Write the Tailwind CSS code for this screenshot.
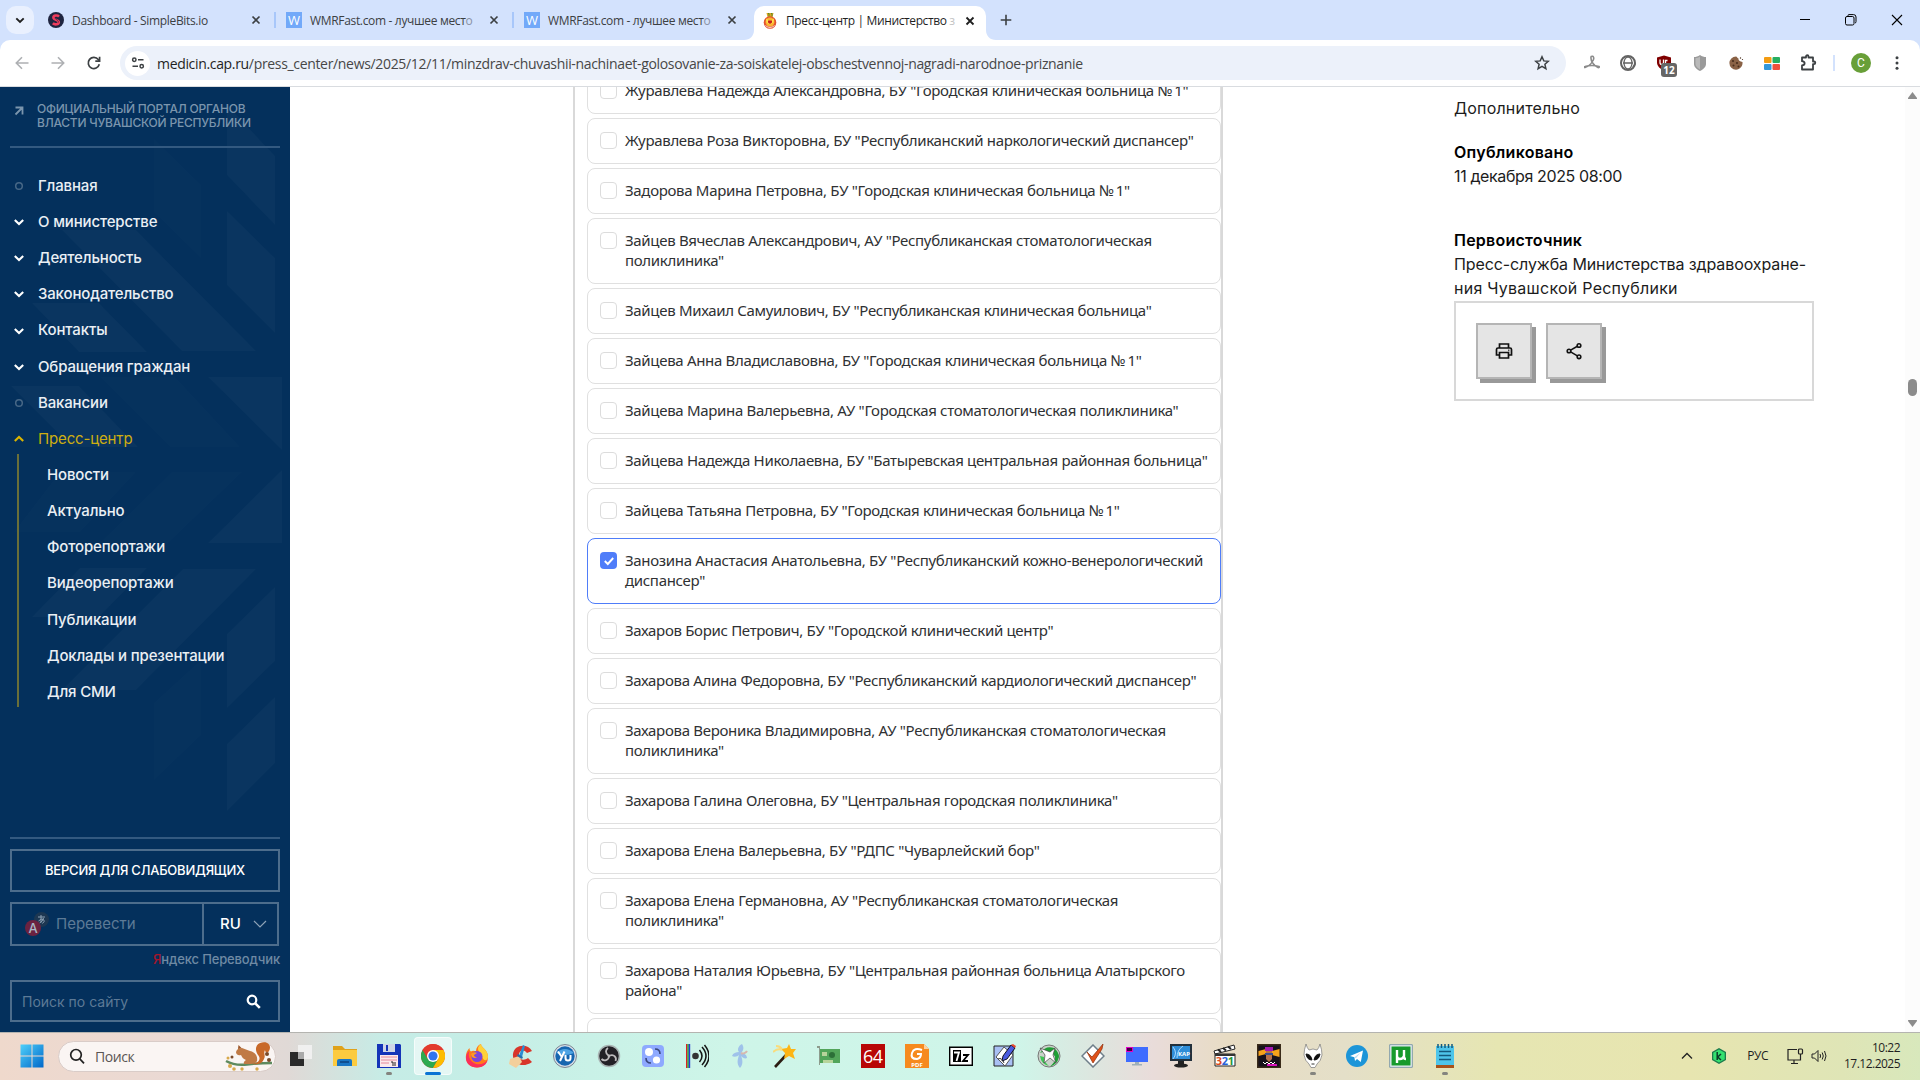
<!DOCTYPE html>
<html lang="ru">
<head>
<meta charset="utf-8">
<title>Пресс-центр | Министерство здравоохранения</title>
<script src="https://cdn.jsdelivr.net/npm/@tailwindcss/browser@4"></script>
</head>
<body class="bg-white overflow-hidden">
<div class="w-[1920px] h-[1080px] flex flex-col overflow-hidden font-['Open_Sans',sans-serif]">

  <!-- Tab strip -->
  <header class="h-10 shrink-0 bg-[#d3e2fd] flex items-stretch text-[12px] tracking-[-0.33px] text-[#3c4043]">
    <div class="w-[37px] pl-1.5 pt-1.5">
      <div class="size-7 rounded-[10px] bg-[#e9f0fe] flex items-center justify-center">
        <svg class="size-3" viewBox="0 0 12 12" fill="none" stroke="#1f1f1f" stroke-width="1.9"><path d="M2.3 4.3 6 8l3.7-3.7"/></svg>
      </div>
    </div>
    <div class="w-[238px] flex items-center pl-[11px]">
      <svg class="size-4 mr-2 shrink-0" viewBox="0 0 16 16"><circle cx="8" cy="8" r="8" fill="#1f2540"/><path d="M11 4.6C9.5 3 5.4 3.300 5.400 5.600c0 2.600 5.400 1.900 5.400 4.700 0 2.300-4 2.700-6 .900" fill="none" stroke="#ef3c5c" stroke-width="2.600"/><path d="M10 5.600C8 4.600 7 5.200 7 6c0 1.500 4 2 3.500 4.500" fill="none" stroke="#1f2540" stroke-width=".6"/></svg>
      <span class="w-[176px] pt-0.5 whitespace-nowrap">Dashboard - SimpleBits.io</span>
      <svg class="size-4" viewBox="0 0 16 16" stroke="#3c4043" stroke-width="1.7"><path d="m4.500 4.500 7 7m0-7-7 7"/></svg>
    </div>
    <div class="w-[238px] flex items-center">
      <span class="w-0.5 h-4 bg-[#a8c7fa] mr-[9px] -ml-px"></span>
      <span class="size-4 mr-2 ml-px bg-[#72a9f9] text-white text-[13px] leading-4 text-center tracking-normal shrink-0">W</span>
      <span class="w-[176px] pt-0.5 whitespace-nowrap">WMRFast.com - лучшее мест<span class="text-[#8a93a5]">о</span></span>
      <svg class="size-4 shrink-0" viewBox="0 0 16 16" stroke="#3c4043" stroke-width="1.7"><path d="m4.500 4.500 7 7m0-7-7 7"/></svg>
    </div>
    <div class="w-[238px] flex items-center">
      <span class="w-0.5 h-4 bg-[#a8c7fa] mr-[9px] -ml-px"></span>
      <span class="size-4 mr-2 ml-px bg-[#72a9f9] text-white text-[13px] leading-4 text-center tracking-normal shrink-0">W</span>
      <span class="w-[176px] pt-0.5 whitespace-nowrap">WMRFast.com - лучшее мест<span class="text-[#8a93a5]">о</span></span>
      <svg class="size-4 shrink-0" viewBox="0 0 16 16" stroke="#3c4043" stroke-width="1.7"><path d="m4.500 4.500 7 7m0-7-7 7"/></svg>
    </div>
    <div class="w-[238px] pt-1.5 flex relative text-[#1f1f1f]">
      <svg class="absolute left-[-7px] top-[30px] w-[252px] h-[10px]" viewBox="0 0 252 10" fill="#fff"><path d="M0 10C6 10 10 6 10 0H242c0 6 4 10 10 10Z"/></svg>
      <div class="ml-[3px] w-[232px] rounded-t-[10px] bg-white flex items-center pl-2 pb-[5px] relative">
        <svg class="size-4 mr-2 shrink-0" viewBox="0 0 16 16"><path d="M4.500 0h7l-1 4h-5z" fill="#d9a520"/><path d="M6 .5h1v3M9 .5h1v3" stroke="#5b8a2a" fill="none"/><circle cx="8" cy="9.500" r="6.300" fill="#e4502d"/><circle cx="8" cy="9" r="4.500" fill="#f9b233"/><path d="M4 5.500 8 8l4-2.500-.5 4L8 11.500l-3.500-2z" fill="#ffe04a"/><path d="M6 7.500h4v2L8 11 6 9.500z" fill="#c81e1e"/><path d="M3.500 12.500c2.500 2.500 6.500 2.500 9 0" stroke="#fff" stroke-width=".8" fill="none"/></svg>
        <span class="w-[176px] pt-px whitespace-nowrap tracking-[-0.38px]">Пресс-центр | Министерство <span class="text-[#c4c4c4]">з</span></span>
        <svg class="size-4 shrink-0" viewBox="0 0 16 16" stroke="#1f1f1f" stroke-width="1.800"><path d="m4.500 4.500 7 7m0-7-7 7"/></svg>
      </div>
    </div>
    <div class="flex items-center pl-[9px]">
      <svg class="size-4" viewBox="0 0 16 16" stroke="#3c4043" stroke-width="1.600"><path d="M8 2.700v10.600M2.700 8h10.600"/></svg>
    </div>
    <div class="ml-auto flex items-center gap-[34px] pr-[17px]">
      <svg class="size-3" viewBox="0 0 12 12" stroke="#000"><path d="M1 5.500h10"/></svg>
      <svg class="size-3" viewBox="0 0 12 12" stroke="#000" fill="none"><rect x=".5" y="2.500" width="8.500" height="8.500" rx="1.500"/><path d="M3 2V1.500Q3 .6 4 .6h4.500Q11 .6 11 3v4.500Q11 9 10 9"/></svg>
      <svg class="size-3" viewBox="0 0 12 12" stroke="#000" stroke-width="1.100"><path d="m1 1 10 10M11 1 1 11"/></svg>
    </div>
  </header>

  <!-- Toolbar -->
  <div class="h-[47px] shrink-0 bg-[#d3e2fd]">
    <div class="h-full bg-white rounded-t-[10px] border-b border-[#d9dce0] flex items-center text-[#474747]">
      <div class="w-[120px] flex items-center pl-3.5 gap-[20px]">
        <svg class="size-4" viewBox="0 0 16 16" fill="none" stroke="#aeb0b3" stroke-width="1.600"><path d="M14.500 8H2.500M8 2.300 2.300 8 8 13.700"/></svg>
        <svg class="size-4" viewBox="0 0 16 16" fill="none" stroke="#aeb0b3" stroke-width="1.600"><path d="M1.500 8h12M8 2.300 13.700 8 8 13.700"/></svg>
        <svg class="size-4" viewBox="0 0 16 16" fill="none" stroke="#3c4043" stroke-width="1.700"><path d="M13.300 9.300A5.600 5.600 0 1 1 12.300 4.500L13.500 6"/><path d="M13.600 1.800v4.300H9.300"/></svg>
      </div>
      <div class="w-[1446px] h-[34px] rounded-full bg-[#ecf1fa] flex items-center pl-[5px] pr-4">
        <div class="size-[25px] rounded-full bg-white flex items-center justify-center mr-[7px]">
          <svg class="size-3.5" viewBox="0 0 14 14" fill="none" stroke="#3c4043" stroke-width="1.500"><circle cx="3.300" cy="3.800" r="1.700"/><path d="M7 3.800h5.500M1.500 10.200H7"/><circle cx="10.700" cy="10.200" r="1.700"/></svg>
        </div>
        <span class="text-[14px] tracking-[-0.33px] whitespace-nowrap"><span class="text-[#1f1f1f]">medicin.cap.ru</span>/press_center/news/2025/12/11/minzdrav-chuvashii-nachinaet-golosovanie-za-soiskatelej-obschestvennoj-nagradi-narodnoe-priznanie</span>
        <svg class="size-4 ml-auto" viewBox="0 0 16 16" fill="none" stroke="#3c4043" stroke-width="1.500"><path d="m8 1.800 1.800 4.100 4.500.4-3.400 3 1 4.400L8 11.400l-3.900 2.300 1-4.400-3.400-3 4.500-.4z"/></svg>
      </div>
      <div class="flex items-center gap-5 pl-[18px]">
        <svg class="size-4" viewBox="0 0 16 16" fill="none" stroke="#8b8b8b"><path d="M7.300 1.500C9.500.5 10.500 3 9 5.500 7.500 8.500 4.500 11.500 1 12.500c-1 .3-1-.8 0-1 5-1.500 9-1.500 14 0 .8.500 0 1.300-1 1C9.500 10.500 6.500 5.500 7 2z" stroke-width="1.600"/></svg>
        <svg class="size-4" viewBox="0 0 16 16" fill="none" stroke="#636363" stroke-width="1.300"><circle cx="8" cy="8" r="7" stroke-width="2"/><ellipse cx="8" cy="8" rx="4" ry="6"/><path d="M3 8h10M13 12l2.500-3.500"/></svg>
        <div class="size-4 relative">
          <svg class="size-4" viewBox="0 0 16 16"><path d="M8 .5 15 2.500v5c0 4-4 7-7 8-3-1-7-4-7-8v-5z" fill="#800000"/><path d="M4 4.500v3q0 2 1.700 2T7.500 7.500v-3M9.500 10V5.500h2" stroke="#fff" fill="none" stroke-width="1.300"/></svg>
          <span class="absolute left-[5px] top-2 w-4 h-3.5 rounded-[3px] bg-[#666] text-white text-[10px] leading-3.5 font-bold text-center">12</span>
        </div>
        <svg class="size-4" viewBox="0 0 16 16"><path d="M8 0c2 1.500 4 2 6 2v7c0 3-3 5.500-6 7-3-1.500-6-4-6-7V2c2 0 4-.5 6-2z" fill="#9a9a9a"/><path d="M8 1.500v13C5.500 13 3.500 11 3.500 9V3.300C5 3.200 6.500 2.500 8 1.500z" fill="#b9b9b9"/></svg>
        <svg class="size-4" viewBox="0 0 16 16"><path d="M8 1.500c1 0 1 1.500 2.500 2C10 5.500 12 6.500 14.500 7c.5 4-2.500 7.700-6.500 7.700A6.600 6.600 0 0 1 8 1.500z" fill="#8a6246"/><g fill="#4a2e1c"><circle cx="5" cy="6" r="1.100"/><circle cx="9" cy="8" r="1.100"/><circle cx="5.500" cy="10.500" r="1"/><circle cx="10.500" cy="11.500" r="1"/><circle cx="12.500" cy="3" r=".7"/><circle cx="14.500" cy="4.500" r=".6"/></g></svg>
        <svg class="size-4" viewBox="0 0 16 16"><rect x="0" y="2" width="7.500" height="6" rx="1" fill="#f39c12"/><rect x="8.500" y="2" width="7.500" height="6" rx="1" fill="#27ae60"/><rect x="0" y="9" width="7.500" height="6" rx="1" fill="#3498db"/><rect x="8.500" y="9" width="7.500" height="6" rx="1" fill="#f0513c"/></svg>
        <svg class="size-[18px] -ml-px" viewBox="0 0 18 18" fill="none" stroke="#3c4043" stroke-width="1.800" stroke-linejoin="round"><path d="M3 3.500h4V2.500a1 1 0 0 1 2.500 0v1h4.500v4h1a1.300 1.300 0 0 1 0 2.600h-1v5.400H3v-4c3.500-.3 3.500-4 0-4.300z"/></svg>
      </div>
      <div class="w-0.5 h-4 bg-[#d3e2fd] ml-4"></div>
      <div class="size-5 ml-4 rounded-full bg-[#689f38] text-white text-[12px] leading-5 text-center font-['Roboto',sans-serif]">C</div>
      <svg class="w-4 h-4 ml-[18px]" viewBox="0 0 16 16" fill="#3c4043"><circle cx="8" cy="2.700" r="1.500"/><circle cx="8" cy="8" r="1.500"/><circle cx="8" cy="13.300" r="1.500"/></svg>
    </div>
  </div>

  <!-- Page -->
  <div class="h-[945px] shrink-0 flex overflow-hidden">

    <aside class="w-[290px] shrink-0 h-full bg-[#04305c] relative overflow-hidden font-['Inter',sans-serif]">
      <svg class="absolute inset-0" width="290" height="945" viewBox="0 87 290 945" fill="#fff">
        <g fill-opacity=".012"><path d="M154 139 201 185V258L154 212zM100 377H175L240 447H170zM60 472H136L80 532H14zM172 472H242L168 543H100zM154 703 201 660V735L154 780z"/></g>
        <g fill-opacity=".026"><path d="M227 105 275 156V225L227 175zM227 211 275 258V333L227 285zM62 230H136L256 351H182zM32 303H99L147 352H79zM11 386H79L138 447H72zM208 377H282V450zM282 470V543H208zM80 568H147L99 617H32zM183 569H256L136 690H62zM227 634 275 587V661L227 708zM227 744 275 697V763L227 811z"/></g>
      </svg>
      <div class="relative h-full flex flex-col px-2.5 text-white">
        <div class="h-[61px] pt-[15px] flex border-b-2 border-[#335980] text-[#7b95ad] text-[12px] leading-[14px] font-medium tracking-[-0.22px]">
          <svg class="w-[10px] h-[10px] ml-1 mr-[13px] mt-1" viewBox="0 0 10 10" fill="none" stroke="#7b95ad" stroke-width="1.800"><path d="M1.500 1.500H8.500V8.500M8.500 1.500 1.500 8.500"/></svg>
          <p class="whitespace-nowrap">ОФИЦИАЛЬНЫЙ ПОРТАЛ ОРГАНОВ<br>ВЛАСТИ ЧУВАШСКОЙ РЕСПУБЛИКИ</p>
        </div>
        <nav class="mt-5 text-[15px] font-medium tracking-[-0.15px] text-[#eaeff4]">
          <ul id="menu"></ul>
          <ul id="submenu" class="ml-[7px] mt-[-3px] pt-[3px] pl-7 h-[253px] border-l-2 border-[#6a6f39]"></ul>
        </nav>
        <div class="mt-auto h-[195px] border-t-2 border-[#335980] pt-2.5 flex flex-col items-stretch">
          <div class="h-[43px] border-2 border-[#4d6d8c] flex items-center justify-center text-[13px] font-medium tracking-[-0.22px]">ВЕРСИЯ ДЛЯ СЛАБОВИДЯЩИХ</div>
          <div class="mt-2.5 h-11 w-[269px] border-2 border-[#4d6d8c] flex items-center text-[15px]">
            <svg class="w-6 h-6 ml-[13px] mr-[7px]" viewBox="0 0 24 24"><circle cx="16.500" cy="7.500" r="7.500" fill="#1d3752"/><path d="M13 5h7M16 3v7.500M13.500 9q3-3 5-1.500t-1 4M18.500 6q-1 4-4 5" stroke="#8da1b4" fill="none"/><circle cx="8" cy="16" r="8" fill="#6b2240"/><text x="8" y="20.500" text-anchor="middle" font-size="13" font-weight="500" fill="#a9b7c6">A</text></svg>
            <span class="text-[#5d7a96] grow">Перевести</span>
            <div class="w-[75px] h-10 border-l-2 border-[#4d6d8c] flex items-center pl-4 text-[15px] font-medium">RU
              <svg class="w-3.5 h-2 ml-3" viewBox="0 0 14 8" fill="none" stroke="#8ea3b7" stroke-width="1.200"><path d="m1 1 6 6 6-6"/></svg>
            </div>
          </div>
          <div class="h-[34px] pt-1 text-right text-[13px] leading-[18px] font-medium tracking-[-0.14px] text-[#6f8aa4]"><span class="text-[#a3152c]">Я</span>ндекс Переводчик</div>
          <div class="h-[42px] border-2 border-[#4d6d8c] flex items-center justify-between pl-2.5 pr-[17px] text-[14px] text-[#5d7a96]"><span>Поиск по сайту</span>
            <svg class="size-[15px]" viewBox="0 0 15 15" fill="none" stroke="#fff"><circle cx="6" cy="6" r="4.300" stroke-width="2.200"/><path d="m9.300 9.300 4.500 4.500" stroke-width="2.600"/></svg>
          </div>
        </div>
      </div>
    </aside>

    <main class="w-[650px] ml-[283px] mr-auto shrink-0 h-full border-x-2 border-[#d9d9d9]">
      <div id="votes" class="w-[634px] ml-3 -mt-[19px] flex flex-col gap-1 font-['Noto_Sans',sans-serif] text-[15px] leading-5 tracking-[-0.32px] text-[#2f3133]"></div>
    </main>

    <section class="w-[360px] mr-[91px] pt-[9px] shrink-0 font-['Inter',sans-serif] text-[16px] leading-6 text-[#1c1c1c]">
      <p class="tracking-[0.19px]">Дополнительно</p>
      <p class="mt-5 font-semibold text-black tracking-[0.26px]">Опубликовано</p>
      <p class="tracking-[-0.37px]">11 декабря 2025 08:00</p>
      <p class="mt-10 font-semibold text-black tracking-[0.23px]">Первоисточник</p>
      <p class="tracking-[-0.1px] whitespace-nowrap">Пресс-служба Министерства здравоохране-<br><span class="tracking-[0.25px]">ния Чувашской Республики</span></p>
      <div class="mt-px h-[100px] border-2 border-[#d8d8d8] p-5 flex gap-3.5">
        <div class="size-14 bg-[#e5e5e5] border-2 border-[#b5b5b5] shadow-[4px_4px_0_#999] flex items-center justify-center">
          <svg class="size-[18px]" viewBox="0 0 18 18" fill="none" stroke="#111" stroke-width="1.700"><path d="M4.500 6V2h9v4M4.500 13H1.500V7.500q0-1.500 1.500-1.500h12q1.500 0 1.500 1.500V13h-3"/><path d="M4.500 10.500h9V16h-9z"/><path d="M13.300 8.300h1"/></svg>
        </div>
        <div class="size-14 bg-[#e5e5e5] border-2 border-[#b5b5b5] shadow-[4px_4px_0_#999] flex items-center justify-center">
          <svg class="size-[18px]" viewBox="0 0 18 18" fill="none" stroke="#111" stroke-width="1.600"><circle cx="4" cy="9" r="1.800"/><circle cx="14" cy="3.500" r="1.800"/><circle cx="14" cy="14.800" r="1.800"/><path d="m5.600 8.100 6.800-3.800M5.600 9.900l6.800 4"/></svg>
        </div>
      </div>
    </section>

    <div class="w-[15px] h-full bg-[#fcfcfc] shrink-0 flex flex-col items-center py-[5px]">
      <svg class="w-[9px] h-[7px]" viewBox="0 0 9 7" fill="#8b8b8b"><path d="M4.500 0 9 6q.3 1-.7 1H.7Q-.3 7 0 6z"/></svg>
      <div class="mt-[280px] w-[9px] h-[17px] rounded-full bg-[#8b8b8b]"></div>
      <svg class="w-[9px] h-[7px] mt-auto" viewBox="0 0 9 7" fill="#8b8b8b"><path d="M4.500 7 0 1Q-.3 0 .7 0h7.600Q9.300 0 9 1z"/></svg>
    </div>
  </div>

  <!-- Taskbar -->
  <footer class="h-12 shrink-0 pb-px border-t border-[#b4b4b0] bg-[linear-gradient(90deg,#efd9cc_0%,#ead9d4_9%,#e0d9d6_15%,#c6ece6_20%,#c5eee6_25%,#cef5e8_38%,#cff5e9_53%,#dde6df_57%,#e9dcda_60%,#e8dcc4_64%,#e4dfc8_70%,#e6e6b2_78%,#e7e5b0_88%,#dfe5b6_96%,#d8e8bc_100%)] flex items-center text-[#1f1f1f]">
    <svg class="size-6 ml-5" viewBox="0 0 24 24"><defs><linearGradient id="win" x1="0" y1="0" x2="1" y2="1"><stop offset="0" stop-color="#4fd0fa"/><stop offset="1" stop-color="#0067c9"/></linearGradient></defs><path fill="url(#win)" d="M.5.500h11v11H.5zM12.500.500h11v11h-11zM.5 12.500h11v11H.5zM12.500 12.500h11v11h-11z"/></svg>
    <div class="ml-3.5 w-[218px] h-[31px] rounded-full bg-[#faf5f3] border border-[#d9ccc8] flex items-center pl-2.5">
      <svg class="size-4" viewBox="0 0 16 16" fill="none" stroke="#222" stroke-width="1.700"><circle cx="7" cy="6.800" r="5.300"/><path d="m10.800 10.800 4.200 4.500"/></svg>
      <span class="ml-2.5 text-[14px] tracking-[-0.4px] text-[#5a5553]">Поиск</span>
      <svg class="w-[50px] h-[31px] ml-auto mr-px" viewBox="0 0 50 31"><path d="M2 20q9 5 21 3.500T48 22" stroke="#5e8a5e" stroke-width="2.500" fill="none"/><path d="M28 23c8-1 9-6 6-9-3-4-3-10 2-12 8-3 12 3 9 8-2 3-4 1-4-1-2 4 1 5-1 9-2 5-7 6-12 5z" fill="#c8692a"/><path d="M12 11q1-4 6-4l8 3c5 1 8 5 7 10-1 2-3 3-6 3h-7c-1-2 1-3 2-4-3-1-4-3-5-5-3 1-5-1-5-3z" fill="#c07a45"/><path d="m14 8 .5-4 3 3z" fill="#9c5527"/><g fill="#d8a94c"><circle cx="6" cy="25" r="2"/><circle cx="10" cy="28" r="1.800"/><circle cx="18" cy="28" r="1.700"/><circle cx="33" cy="28" r="1.700"/><circle cx="4" cy="17" r="1.500"/></g><g fill="#7a4a2a"><circle cx="43" cy="13" r="2"/><circle cx="8" cy="16" r="1.500"/><circle cx="45" cy="19" r="2"/></g></svg>
    </div>
    <div class="ml-[3px] h-full flex items-center" id="apps"></div>
    <div class="ml-auto flex items-center text-[12px]">
      <svg class="w-3 h-2 mr-[18px]" viewBox="0 0 12 8" fill="none" stroke="#222" stroke-width="1.300"><path d="m1 6.500 5-5 5 5"/></svg>
      <svg class="size-4 mr-5" viewBox="0 0 16 16"><path d="m8 0 7 4v8l-7 4-7-4V4z" fill="#1d7a4c"/><path d="m8 1.500 5.700 3.300v6.400L8 14.500l-5.700-3.300V4.800z" fill="#35e06f"/><path d="M6.200 4v8M10 6l-3.300 3L10 12" stroke="#0b3b28" stroke-width="1.500" fill="none"/></svg>
      <span class="mr-[19px] tracking-[-0.5px]">РУС</span>
      <svg class="w-[17px] h-[17px] mr-[7px]" viewBox="0 0 17 17" fill="none" stroke="#222" stroke-width="1.200"><path d="M10 1.500H1v10.500h12.500V9M7 12v3.500M4 15.500h7"/><rect x="11.500" y="1" width="4" height="5" rx="1"/><path d="M13.500 6v3"/></svg>
      <svg class="w-[17px] h-4 mr-3" viewBox="0 0 17 16" fill="none" stroke="#222"><path d="M1 6h2.500L7 2.500v11L3.500 10H1z"/><path d="M9 6q1.200 2 0 4M11.200 4.500q2.200 3.500 0 7M13.500 3q3 5 0 10"/></svg>
      <div class="w-[60px] pr-5 box-content text-right text-[12px] leading-4 tracking-[-0.52px]">10:22<br>17.12.2025</div>
    </div>
  </footer>
</div>

<script>
// Candidate rows: label, and true for the chosen one
const votes = [
  ['Журавлева Надежда Александровна, БУ "Городская клиническая больница № 1"'],
  ['Журавлева Роза Викторовна, БУ "Республиканский наркологический диспансер"'],
  ['Задорова Марина Петровна, БУ "Городская клиническая больница № 1"'],
  ['Зайцев Вячеслав Александрович, АУ "Республиканская стоматологическая<br>поликлиника"'],
  ['Зайцев Михаил Самуилович, БУ "Республиканская клиническая больница"'],
  ['Зайцева Анна Владиславовна, БУ "Городская клиническая больница № 1"'],
  ['Зайцева Марина Валерьевна, АУ "Городская стоматологическая поликлиника"'],
  ['Зайцева Надежда Николаевна, БУ "Батыревская центральная районная больница"'],
  ['Зайцева Татьяна Петровна, БУ "Городская клиническая больница № 1"'],
  ['Занозина Анастасия Анатольевна, БУ "Республиканский кожно-венерологический<br>диспансер"', true],
  ['Захаров Борис Петрович, БУ "Городской клинический центр"'],
  ['Захарова Алина Федоровна, БУ "Республиканский кардиологический диспансер"'],
  ['Захарова Вероника Владимировна, АУ "Республиканская стоматологическая<br>поликлиника"'],
  ['Захарова Галина Олеговна, БУ "Центральная городская поликлиника"'],
  ['Захарова Елена Валерьевна, БУ "РДПС "Чуварлейский бор"'],
  ['Захарова Елена Германовна, АУ "Республиканская стоматологическая<br>поликлиника"'],
  ['Захарова Наталия Юрьевна, БУ "Центральная районная больница Алатырского<br>района"'],
  ['']
];
document.getElementById('votes').innerHTML = votes.map(([t, on]) => `
  <label class="min-h-[46px] shrink-0 rounded-lg border ${on ? 'border-[#4f7df9]' : 'border-[#e0e0e0]'} py-3 pl-3 flex items-start">
    ${on
      ? '<span class="w-[17px] h-[17px] mt-px mr-2 rounded bg-[#4f7df9] flex items-center justify-center shrink-0"><svg class="size-3" viewBox="0 0 12 12" fill="none" stroke="#fff" stroke-width="1.900"><path d="m1.800 6 3 3 5.400-6"/></svg></span>'
      : '<span class="w-[17px] h-[17px] mt-px mr-2 rounded border border-[#dcdcdc] shrink-0"></span>'}
    <span class="-mt-px mb-px whitespace-nowrap">${t.replace('№', '<span class="tracking-[-2px]">№</span>')}</span>
  </label>`).join('');

// Sidebar: o = plain item, v = collapsed group, a = open group
const marks = {
  o: '<svg class="size-2.5" viewBox="0 0 10 10" fill="none" stroke="#476786" stroke-width="1.500"><circle cx="5" cy="5" r="3.300"/></svg>',
  v: '<svg class="size-2.5" viewBox="0 0 10 10" fill="none" stroke="#fff" stroke-width="2.100"><path d="m.8 3 4.200 4 4.200-4"/></svg>',
  a: '<svg class="size-2.5" viewBox="0 0 10 10" fill="none" stroke="#dbb400" stroke-width="2.100"><path d="m.8 7 4.200-4 4.200 4"/></svg>'
};
document.getElementById('menu').innerHTML = [
  ['o', 'Главная'], ['v', 'О министерстве'], ['v', 'Деятельность'], ['v', 'Законодательство'],
  ['v', 'Контакты'], ['v', 'Обращения граждан'], ['o', 'Вакансии'], ['a', 'Пресс-центр']
].map(([m, t]) => `<li class="h-[36.15px] flex items-center pl-1 gap-3.5 ${m === 'a' ? 'text-[#cfae10] font-normal' : ''}">${marks[m]}<span>${t}</span></li>`).join('');
document.getElementById('submenu').innerHTML = ['Новости', 'Актуально', 'Фоторепортажи', 'Видеорепортажи', 'Публикации', 'Доклады и презентации', 'Для СМИ']
  .map(t => `<li class="h-[36.15px] flex items-center">${t}</li>`).join('');

// Taskbar icons on a 24-unit grid
const apps = [
  ['<path d="M1 8h14v14H1z" fill="#2a2a2a"/><path d="M9 1h14v14H9z" fill="#f3f3f3" fill-opacity=".85"/><path d="M9 8h6v7H9z" fill="#aaa"/>'],
  ['<path d="M0 2h9l3 3h12v17H0z" fill="#e0a21a"/><path d="M0 6h24v16H0z" fill="#fccb3f"/><path d="M4 22v-5q0-2 2-2h11q2 0 2 2v5z" fill="#1a76c4"/><path d="M7 17h9v2H7z" fill="#0f4f91"/>'],
  ['<path d="M0 0h23l1 1v23H0z" fill="#1434b8"/><path d="M6 0h12v8H6z" fill="#cfd6e6"/><path d="M9 1h2v6H9z" fill="#1434b8"/><path d="M3 11h18v12H3z" fill="#fbe9ec"/><path d="M4 13h16M4 16h16M4 19h8" stroke="#e58a9a"/><path d="M14 18h2v4M18 18v4" stroke="#222" fill="none"/>', 'dot'],
  ['<circle cx="12" cy="12" r="12" fill="#e33b2e"/><path d="M1.600 6A12 12 0 0 0 12 24l5.200-9-5.200 2-5.200-2z" fill="#2da94f"/><path d="M22.400 6A12 12 0 0 1 12 24l5.200-9V9L12 6z" fill="#fdbd00"/><path d="M1.600 6A12 12 0 0 1 22.400 6H12l-5 3-1 3z" fill="#e33b2e"/><circle cx="12" cy="12" r="6" fill="#fff"/><circle cx="12" cy="12" r="4.600" fill="#3174f0"/>', 'on'],
  ['<path d="M12 23.500C5 23.500.8 18.500.8 13c0-4 1.700-7 3.700-9 0 2 .5 3 1.500 3.500C8 6 9 7 11 7c0-3 2-6 5-7 0 4 7 5 7 13 0 6-5 10.500-11 10.500z" fill="#ff7a1a"/><path d="M16 0c0 4 7 5 7 13-1 5-5 4-6-1 0-3-4-4-4-7 0-2 1-4 3-5z" fill="#ffd23a"/><path d="M1 14c0 6 5 9.500 11 9.500S22 20 22.500 16c-3 5-14 7-18-2-1-2-1-5 0-7-2 1-3.500 4-3.500 7z" fill="#fb2e5b"/><circle cx="12" cy="12.500" r="5.500" fill="#7b46dd"/><path d="M6 10q3-3 6-1l-3 2q0 2 3 2-2 2-5 0z" fill="#ff9a22"/>'],
  ['<path d="M23 7C19-1 5 0 4 10c-1 9 9 15 19 8l-4-4c-4 3-9 2-9-3s5-6 8-2z" fill="#d8352a"/><path d="M14 1 10 12l3 1L16 2z" fill="#2a8dd4"/><path d="m1 15 9-3 3 6-6 6-7-4z" fill="#f3cf9b"/><path d="m9 10 5 3-1 2-5-3z" fill="#246fae"/>'],
  ['<circle cx="12" cy="12" r="11.500" fill="#d6dde6" stroke="#7b8794"/><circle cx="12" cy="12" r="9.700" fill="#1766b0"/><path d="M3 9q9-8 18 0-9 4-18 0z" fill="#4fa4e4"/><path d="m5 7.500 3.500 5m3-5L7 17M12.500 11v3q0 2.500 2.500 2.500t2.500-2.500v-3" stroke="#fff" stroke-width="2" fill="none"/>'],
  ['<circle cx="12" cy="12" r="10.500" fill="#232126" stroke="#a9b4b4" stroke-width="1.500"/><path d="M11.500 11.500C8 9.500 8.500 5.500 11 4M12 12.500c-.5 4-5 5-7.500 2.500M13 11.500c4-1.500 7 2 5.500 5.500" stroke="#bdbabc" stroke-width="1.800" fill="none"/><circle cx="12" cy="12" r="1.400" fill="#bdbabc"/>'],
  ['<rect x="1" y="1" width="22" height="22" rx="4" fill="#8ea9ff"/><circle cx="8" cy="8" r="4" fill="#fff"/><circle cx="15.500" cy="16" r="3.600" fill="#fff"/><path d="M14 5q5 0 5 5M5 14q0 5 5 5" stroke="#39477c" stroke-width="1.600" fill="none"/>'],
  ['<path d="M1 0h1.400v24H1z" fill="#e02020"/><path d="M2.400 0h1.400v24H2.400z" fill="#20a030"/><path d="M3.800 0h1.400v24H3.800z" fill="#2438d8"/><circle cx="10.500" cy="12" r="3.300" fill="#333"/><path d="M14.500 6q5 6 0 12M17 3q8 9 0 18M19.500 1q9 11 0 22" stroke="#151515" stroke-width="1.500" fill="none"/>'],
  ['<path d="M13 0c-4 2-5 6-3 8-3 0-6 1-7 4 2 1 5 1 7-1-1 4-3 8 1 13 3-3 3-8 1-12 2 2 4 3 6 2 0-3-3-5-6-5 3-3 3-6 1-9z" fill="#94b5ea" fill-opacity=".8"/><path d="M12 9c2 1 5 0 6-2" stroke="#d7b7ae" stroke-width="2" fill="none"/>'],
  ['<path d="M2 23 15 9" stroke="#2b1c12" stroke-width="2.600"/><path d="m16 0 2 5 5 0-3 4 2 6-6-3-5 3 1-6-4-4 6-1z" fill="#fdb515"/><path d="M0 8q5-4 9-2M3 2q4 0 6 3" stroke="#f9dc7c" stroke-width="2" fill="none"/>'],
  ['<path d="M0 2h3v19H2V4H0z" fill="#8d9b8d"/><path d="M3 5h20v14H3z" fill="#52a55a"/><circle cx="15" cy="11" r="3" fill="#2c6f38"/><path d="M5 8h5v4H5zM6 16h10v3H6z" fill="#b7d49b"/>'],
  ['<path d="M0 0h24v24H0z" fill="#b80606"/><text x="12" y="18.500" font-size="18" fill="#fff" text-anchor="middle" textLength="20">64</text>'],
  ['<path d="M0 0h19l5 5v19H0z" fill="#f68a1e"/><path d="M19 0v5h5z" fill="#fbd0a0"/><path d="M17 6q-8-3-10 3t5 6q4-1 4-5h-4" stroke="#fff" stroke-width="2" fill="none"/><text x="12" y="22.500" font-size="6" font-weight="700" fill="#fff" text-anchor="middle">PDF</text>'],
  ['<path d="M.7 3.200h22.600v18H.7z" fill="#fff" stroke="#000" stroke-width="1.400"/><path d="M4 6h8v12H4z" fill="#000"/><path d="M5 8.500h5L7.500 17" stroke="#fff" stroke-width="1.800" fill="none"/><path d="M14 11h5l-5 6h5" stroke="#000" stroke-width="1.800" fill="none"/>'],
  ['<path d="M1 2h19v20H1z" fill="#a9c0f4" stroke="#222"/><path d="m3 13 8-10 9 8-8 11z" fill="#fff" stroke="#555"/><path d="m10 12 8-11 4 3-8 11-5 2z" fill="#4a5be0" stroke="#112"/><path d="m18 1 2-1 3 2-1 2z" fill="#e8492f"/><path d="M5 15q4-2 6 4" stroke="#333" fill="none"/>'],
  ['<circle cx="12" cy="12" r="11" fill="#c9d2c9" stroke="#777"/><path d="M3 9Q9 1 17 4q5 4 5 9-2 8-9 9.500 6-5 5-10Q13 5 3 9z" fill="#1f9e35"/><path d="M3 12q1 8 9 10-5-4-5-9z" fill="#3fc455"/><path d="m3 4 10 4 5-4-2 7 3 8-6-5-6 5 1-8z" fill="#fff" stroke="#444" stroke-width=".7"/>'],
  ['<path d="m12 1 11 11-11 11L1 12z" fill="#fff" stroke="#6f7f8a" stroke-width="1.500"/><path d="m6 8 5 5L22 0l-1 5-9 14z" fill="#e0521a" stroke="#8c2d08" stroke-width=".7"/>'],
  ['<path d="M1 3h22v15H1z" fill="#3f6cff"/><path d="M1 3h7v5H1z" fill="#e000c8"/><path d="M2 4h5v3H2z" fill="#400040"/><path d="M10 18h4v2h3v1.500H7V20h3z" fill="#9fb0b8"/>'],
  ['<path d="M1 0h22v17H1z" fill="#22303c"/><path d="M3 2h18v13H3z" fill="#2f8dd8"/><path d="M4 3q5 6 0 12M8 14q0-8 6-12" stroke="#a6d8ff" fill="none"/><text x="15" y="12" font-size="6" font-weight="700" fill="#fff" text-anchor="middle">КАР</text><path d="M9 17h6v3H9z" fill="#222"/><ellipse cx="12" cy="21.500" rx="7" ry="2" fill="#222"/>'],
  ['<path d="m1 7 20-6 1 4L2 10z" fill="#fff" stroke="#222"/><path d="m5 5.500 3 2.500M10 4l3 2.500M15 2.500 18 5" stroke="#222" stroke-width="2"/><path d="M2 10h20v12H2z" fill="#fff" stroke="#222"/><path d="M2 10h20v2H2z" fill="#333"/><g font-size="11" font-weight="700" text-anchor="middle"><text x="6" y="21" fill="#e04a1c">3</text><text x="12" y="21" fill="#2a62d8">2</text><text x="18" y="21" fill="#26973a">1</text></g>'],
  ['<path d="M.7.700h22.600v22.600H.7z" fill="#17121a" stroke="#3a2b1a" stroke-width="1.400"/><path d="M1.500 7 9 5v5l-7.500 2zM22.500 5 15 7v4l7.500 2z" fill="#f5a21c"/><path d="M8 3h8v4H8z" fill="#a418b0"/><path d="M9 7h6v8l-3 3-3-3z" fill="#b4704a"/><path d="M8 9h8v2H8z" fill="#38508e"/><path d="m6 18 2 2 2-2 2 2 2-2 2 2 2-2" stroke="#fff" fill="none"/><path d="M10 20h10v2H10z" fill="#d610b8"/>'],
  ['<path d="M5 0q1 4 3 6 4-2 8 0 2-2 3-6 2 6 2 11-1 6-5 9l-2 3.500h-4L8 20q-4-3-5-9 0-5 2-11z" fill="#fff" stroke="#777" stroke-width=".7"/><path d="M5 10q5 0 6 6-5 0-6-6zM19 10q-5 0-6 6 5 0 6-6z" fill="#101010" stroke="#101010"/><path d="M10.500 20h3" stroke="#333"/>', 'dot'],
  ['<circle cx="12" cy="12" r="11" fill="#1c95d8"/><path d="m5 12 13-5.500-2.200 11.500-3.800-3-2 2-.6-3.700z" fill="#fff"/><path d="m9.400 13.300 6-4.600-4.500 5.500" fill="#b7dcf2"/>'],
  ['<path d="M.7.700h22.600v22.600H.7z" fill="#e6eef2" stroke="#7f9aa8"/><path d="M2.500 2.500h19v19h-19z" fill="#179a2c"/><path d="M8 19V6v6q0 3 3 3t4-3V6v7q0 2 2 2" stroke="#fff" stroke-width="2.400" fill="none"/>'],
  ['<path d="M3 2h18v19H3z" fill="#4ec5ea"/><path d="M5 0v4M8.500 0v4M12 0v4M15.500 0v4M19 0v4" stroke="#14597c" stroke-width="1.500"/><path d="M6 7.500h12M6 11.500h12M6 15.500h12" stroke="#14597c" stroke-width="1.700"/><path d="M3 21h18v3H3z" fill="#a8521a"/>', 'dot']
];
document.getElementById('apps').innerHTML = apps.map(([g, s]) => `
  <div class="w-11 h-full relative flex items-center justify-center">
    ${s === 'on' ? '<span class="absolute left-[3px] top-1 w-[38px] h-[38px] rounded bg-white/55 border border-white/60"></span><span class="absolute left-3.5 bottom-1 w-4 h-[3px] rounded-full bg-[#0a74d4]"></span>' : ''}
    ${s === 'dot' ? '<span class="absolute left-[19px] bottom-1 w-1.5 h-[3px] rounded-full bg-[#84847f]"></span>' : ''}
    <svg class="size-6 relative" viewBox="0 0 24 24">${g}</svg>
  </div>`).join('');
</script>
</body>
</html>
